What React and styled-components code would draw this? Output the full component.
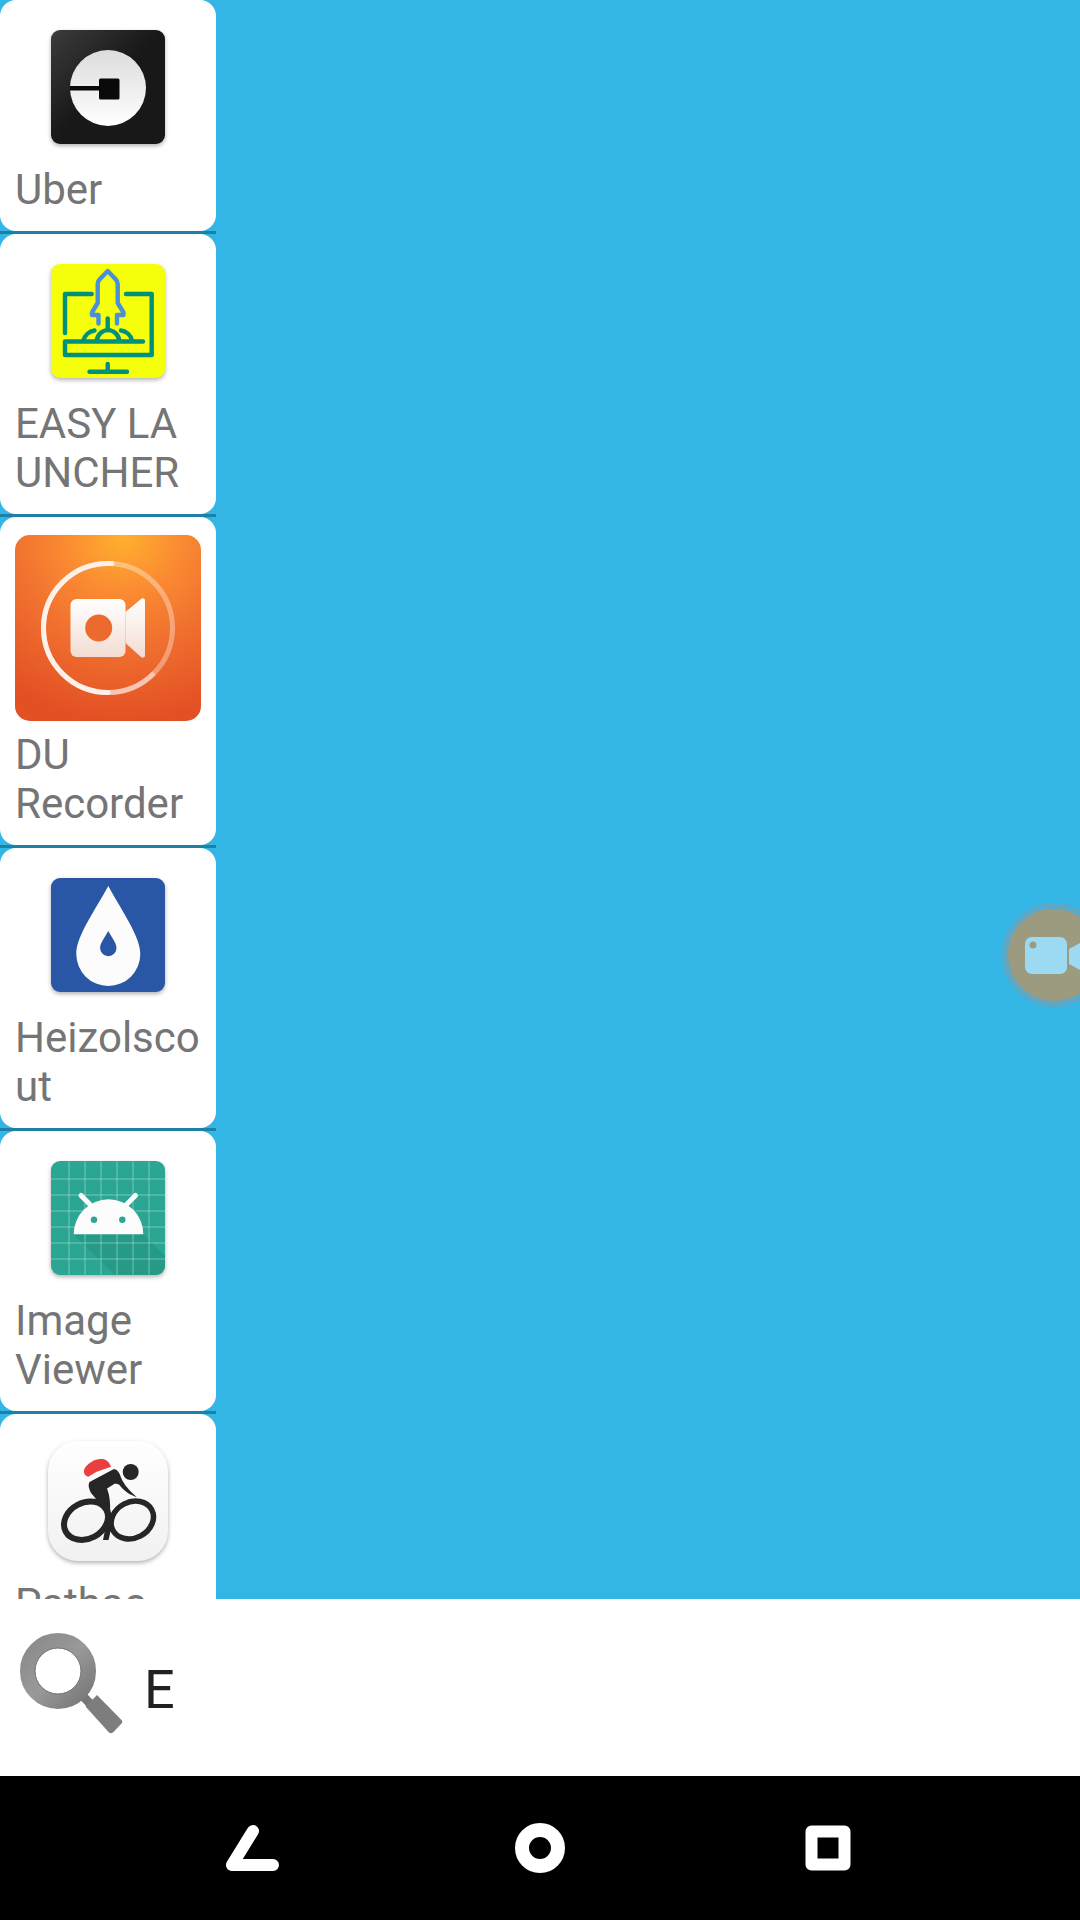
import styled, { createGlobalStyle } from "styled-components";

const GlobalStyle = createGlobalStyle`
  html, body {
    margin: 0;
    padding: 0;
    background: #000;
  }
`;

const Screen = styled.div`
  width: 1080px;
  height: 1920px;
  display: flex;
  flex-direction: column;
  font-family: Roboto, "Liberation Sans", sans-serif;
  overflow: hidden;
`;

const Main = styled.div`
  position: relative;
  flex: 1;
  min-height: 0;
  background: #33b5e5;
  overflow: hidden;
`;

const AppList = styled.div`
  width: 216px;
  display: flex;
  flex-direction: column;
`;

const Slot = styled.div`
  border-bottom: 3px solid #2080a4;
`;

const Card = styled.div`
  background: #fff;
  border-radius: 16px;
  padding: 18px 15px 17px;
`;

const IconBox = styled.div`
  height: ${(p) => (p.$large ? 186 : 138)}px;
  margin-bottom: 9px;
  display: flex;
  align-items: center;
  justify-content: center;
`;

const IconArt = styled.svg`
  display: block;
  flex: none;
  filter: ${(p) => (p.$flat ? "none" : "drop-shadow(0 2px 2px rgba(0, 0, 0, 0.3))")};
`;

const Label = styled.div`
  font-size: 42px;
  line-height: 49px;
  color: #757575;
  white-space: nowrap;
`;

const LabelLine = styled.span`
  display: block;
`;

const Fab = styled.div`
  position: absolute;
  left: 1002px;
  top: 903px;
  width: 104px;
  height: 104px;
  box-sizing: border-box;
  border-radius: 50%;
  background: #9c9a7f;
  border: 6px solid #5ba9c6;
`;

const FabIcon = styled.svg`
  display: block;
  position: absolute;
  left: 11px;
  top: 22px;
`;

const SearchBar = styled.div`
  height: 177px;
  flex: none;
  background: #fff;
  display: flex;
  align-items: center;
  padding-left: 19px;
  gap: 21px;
`;

const SearchIcon = styled.svg`
  display: block;
  flex: none;
  margin-top: -6px;
  filter: blur(0.7px);
`;

const SearchText = styled.div`
  font-size: 54px;
  line-height: 64px;
  color: #212121;
  margin-top: 5px;
`;

const NavBar = styled.div`
  height: 144px;
  flex: none;
  background: #000;
  display: flex;
  justify-content: center;
`;

const NavButton = styled.div`
  width: 288px;
  display: flex;
  align-items: center;
  justify-content: center;
`;

const UberIcon = () => (
  <IconArt width="114" height="114" viewBox="0 0 114 114">
    <defs>
      <linearGradient id="uberBg" x1="0" y1="0" x2="0.7" y2="0.7">
        <stop offset="0" stopColor="#3c3c3c" />
        <stop offset="0.7" stopColor="#181818" />
      </linearGradient>
      <linearGradient id="uberDisc" x1="0" y1="0" x2="0" y2="1">
        <stop offset="0" stopColor="#dcdcdc" />
        <stop offset="1" stopColor="#ffffff" />
      </linearGradient>
    </defs>
    <rect width="114" height="114" rx="9" fill="url(#uberBg)" />
    <circle cx="57" cy="58" r="38" fill="url(#uberDisc)" />
    <rect x="19" y="56" width="30" height="4.5" fill="#0a0a0a" />
    <rect x="48" y="48.5" width="20.5" height="21" rx="1.5" fill="#0a0a0a" />
  </IconArt>
);

const EasyLauncherIcon = () => (
  <IconArt width="114" height="114" viewBox="0 0 114 114">
    <rect width="114" height="114" rx="9" fill="#f5ff0c" />
    <g fill="none" stroke="#00917a" strokeWidth="4.4" strokeLinecap="round" strokeLinejoin="round">
      <path d="M40.7 30H14V69" />
      <path d="M75 30H100.7V91H14V77.5H92" />
      <path d="M56.7 100V107.7M38.5 107.7H76" />
      <path d="M45.7 76.5A11.4 12 0 0 1 68.3 76.5" />
      <path d="M32.5 76.5A13 13 0 0 1 43.5 66.5M81 76.5A13 13 0 0 0 70 66.5" />
      <path d="M56.7 54.5V64" />
    </g>
    <g fill="none" stroke="#4a90d9" strokeWidth="4.4" strokeLinecap="round" strokeLinejoin="round">
      <path d="M46.7 39V20Q46.7 17 49 15L56.7 7L64.4 15Q66.7 17 66.7 20V39L72.5 48.5V51H66V59.5M46.7 39L41 48.5V51H47.5V59.5" />
    </g>
  </IconArt>
);

const DuRecorderIcon = () => (
  <IconArt $flat width="186" height="186" viewBox="0 0 186 186">
    <defs>
      <radialGradient id="duBg" cx="0.58" cy="0" r="1" fx="0.58" fy="0">
        <stop offset="0" stopColor="#ffb12e" />
        <stop offset="0.3" stopColor="#fb8c32" />
        <stop offset="0.6" stopColor="#f0702f" />
        <stop offset="1" stopColor="#e35024" />
      </radialGradient>
      <linearGradient id="duCam" x1="0" y1="0" x2="0" y2="1">
        <stop offset="0" stopColor="#ffffff" />
        <stop offset="1" stopColor="#f3dcd2" />
      </linearGradient>
    </defs>
    <rect width="186" height="186" rx="15" fill="url(#duBg)" />
    <circle cx="93" cy="93" r="64.5" fill="none" stroke="#fff" strokeOpacity="0.35" strokeWidth="5" />
    <path d="M93 157.5A64.5 64.5 0 0 0 139 138" fill="none" stroke="#fff" strokeOpacity="0.45" strokeWidth="5" />
    <path d="M93 157.5A64.5 64.5 0 0 1 93 28.5H97" fill="none" stroke="#fdf0e8" strokeWidth="5" strokeLinecap="round" />
    <rect x="55.5" y="64" width="55" height="58" rx="6" fill="url(#duCam)" />
    <circle cx="83.7" cy="93" r="13.5" fill="#ec6a2e" />
    <path d="M110.5 77L126 64C128 62.5 130 63.5 130 66V120C130 122.5 128 123.5 126 122L110.5 108Z" fill="url(#duCam)" />
  </IconArt>
);

const HeizolIcon = () => (
  <IconArt width="114" height="114" viewBox="0 0 114 114">
    <rect width="114" height="114" rx="9" fill="#2a56a6" />
    <path d="M57.3 8C45 31 25 58 25.3 76A32 32 0 0 0 89.3 76C89.5 58 69.5 31 57.3 8Z" fill="#fcfcfc" />
    <path d="M57.3 53C54 59 49.1 65 49.1 70A8.2 8.2 0 0 0 65.5 70C65.5 65 60.5 59 57.3 53Z" fill="#2a56a6" />
  </IconArt>
);

const gridStops = [18, 34, 50, 66, 82, 98];

const ImageViewerIcon = () => (
  <IconArt width="114" height="114" viewBox="0 0 114 114">
    <defs>
      <clipPath id="viewerClip">
        <rect width="114" height="114" rx="9" />
      </clipPath>
    </defs>
    <g clipPath="url(#viewerClip)">
      <rect width="114" height="114" fill="#2aa692" />
      <path d="M22.7 73.3L64 114H114V95L92.3 73.3Z" fill="#1f8f7e" fillOpacity="0.55" />
      {gridStops.map((n) => (
        <g key={n} stroke="#fff" strokeOpacity="0.38" strokeWidth="1">
          <line x1={n} y1="0" x2={n} y2="114" />
          <line x1="0" y1={n} x2="114" y2={n} />
        </g>
      ))}
    </g>
    <path d="M30 34.5L39 43.5M84.5 34.5L75.5 43.5" stroke="#fcfcfc" strokeWidth="5" strokeLinecap="round" />
    <path d="M22.7 73.3A34.8 35 0 0 1 92.3 73.3Z" fill="#fcfcfc" />
    <circle cx="43" cy="58.7" r="3.2" fill="#2aa692" />
    <circle cx="71.3" cy="58.7" r="3.2" fill="#2aa692" />
  </IconArt>
);

const PathaoIcon = () => (
  <IconArt width="120" height="120" viewBox="0 0 120 120">
    <defs>
      <linearGradient id="pathaoBg" x1="0" y1="0" x2="0" y2="1">
        <stop offset="0" stopColor="#ffffff" />
        <stop offset="1" stopColor="#f1f1f1" />
      </linearGradient>
    </defs>
    <rect width="120" height="120" rx="30" fill="url(#pathaoBg)" />
    <path d="M36 29C37 25 44 18.5 52 18C57 17.5 61 20 63 25.7L48.7 30.7L40.3 35.7C37 35 35.5 32 36 29Z" fill="#ea3f3f" />
    <circle cx="82.7" cy="31" r="8" fill="#262626" />
    <path d="M41.5 41L65 28.5C68 27.5 71 30 73 36.5C76 44 82 50 88.7 56C82 54 76 50 71 43.5L67 42.5L59 47.5C62 55 63 65 61.5 78C57 70 50 60 43 52C40.5 47 40 44 41.5 41Z" fill="#262626" />
    <ellipse cx="38" cy="79.7" rx="23" ry="18" fill="none" stroke="#262626" strokeWidth="6" transform="rotate(-28 38 79.7)" />
    <ellipse cx="84.3" cy="79" rx="22" ry="18" fill="none" stroke="#262626" strokeWidth="5.5" transform="rotate(-28 84.3 79)" />
    <path d="M57 68L60 74L55 99H60.5L65 80L62 68Z" fill="#262626" />
  </IconArt>
);

const apps = [
  { id: "uber", lines: ["Uber"], Icon: UberIcon },
  { id: "easy", lines: ["EASY LA", "UNCHER"], Icon: EasyLauncherIcon },
  { id: "du", lines: ["DU", "Recorder"], Icon: DuRecorderIcon, large: true },
  { id: "heizol", lines: ["Heizolsco", "ut"], Icon: HeizolIcon },
  { id: "viewer", lines: ["Image", "Viewer"], Icon: ImageViewerIcon },
  { id: "pathao", lines: ["Pathao"], Icon: PathaoIcon },
];

const AppCard = ({ app }) => {
  const { Icon, lines, large } = app;
  return (
    <Slot>
      <Card>
        <IconBox $large={large}>
          <Icon />
        </IconBox>
        <Label>
          {lines.map((line) => (
            <LabelLine key={line}>{line}</LabelLine>
          ))}
        </Label>
      </Card>
    </Slot>
  );
};

const App = () => {
  return (
    <Screen>
      <GlobalStyle />
      <Main>
        <AppList>
          {apps.map((app) => (
            <AppCard key={app.id} app={app} />
          ))}
        </AppList>
        <Fab>
          <FabIcon width="67" height="50" viewBox="0 0 67 50">
            <rect x="6" y="6" width="42" height="37" rx="7" fill="#9cdaf3" />
            <circle cx="14" cy="14" r="3.5" fill="#9c9a7f" />
            <path d="M50 18L61 12V39L50 33Z" fill="#9cdaf3" />
          </FabIcon>
        </Fab>
      </Main>
      <SearchBar>
        <SearchIcon width="104" height="104" viewBox="0 0 104 104">
          <defs>
            <linearGradient id="lensMetal" x1="0" y1="0" x2="1" y2="1">
              <stop offset="0" stopColor="#8a8a8a" />
              <stop offset="0.5" stopColor="#999999" />
              <stop offset="1" stopColor="#777777" />
            </linearGradient>
          </defs>
          <path d="M62 61L76 76" stroke="#777" strokeWidth="9" />
          <path d="M66.5 73.5L78 62L103 87.5Q104 89 102.5 90.5L94 99.5Q92 101 90 99.5Z" fill="#7d7d7d" />
          <circle cx="39" cy="38" r="30.5" fill="none" stroke="url(#lensMetal)" strokeWidth="15" />
          <circle cx="39" cy="38" r="23" fill="none" stroke="#6e6e6e" strokeWidth="1" />
        </SearchIcon>
        <SearchText>E</SearchText>
      </SearchBar>
      <NavBar>
        <NavButton>
          <svg width="60" height="60" viewBox="0 0 60 60">
            <path d="M31 13L10 47H51" fill="none" stroke="#fff" strokeWidth="12" strokeLinecap="round" strokeLinejoin="round" />
          </svg>
        </NavButton>
        <NavButton>
          <svg width="60" height="60" viewBox="0 0 60 60">
            <circle cx="30" cy="30" r="18" fill="none" stroke="#fff" strokeWidth="14" />
          </svg>
        </NavButton>
        <NavButton>
          <svg width="60" height="60" viewBox="0 0 60 60">
            <path d="M13.5 13.5H46.5V46.5H13.5Z" fill="none" stroke="#fff" strokeWidth="12" strokeLinejoin="round" />
          </svg>
        </NavButton>
      </NavBar>
    </Screen>
  );
};

export default App;
